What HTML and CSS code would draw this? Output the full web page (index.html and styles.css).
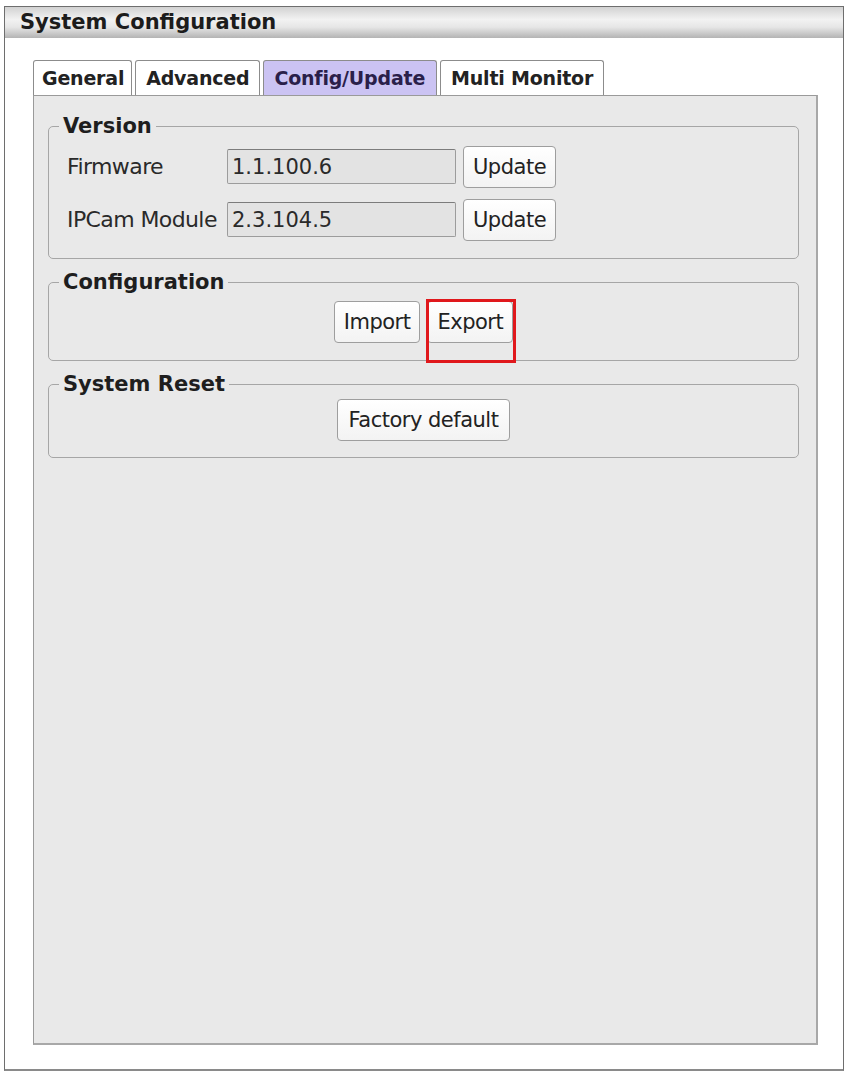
FILE: index.html
```html
<!DOCTYPE html>
<html lang="en">
<head>
    <meta charset="UTF-8">
    <meta name="viewport" content="width=device-width, initial-scale=1.0">
    <title>System Configuration</title>
    <link rel="stylesheet" href="styles.css">
</head>
<body>

    <div class="window">
        <div class="title-bar">System Configuration</div>

        <div class="content">
            <div class="tabs">
                <div class="tab first">General</div>
                <div class="tab">Advanced</div>
                <div class="tab active">Config/Update</div>
                <div class="tab">Multi Monitor</div>
            </div>

            <div class="panel">
                <fieldset class="group version">
                    <legend>Version</legend>
                    <div class="row">
                        <label>Firmware</label>
                        <input type="text" value="1.1.100.6" readonly>
                        <button>Update</button>
                    </div>
                    <div class="row">
                        <label>IPCam Module</label>
                        <input type="text" value="2.3.104.5" readonly>
                        <button>Update</button>
                    </div>
                </fieldset>

                <fieldset class="group config">
                    <legend>Configuration</legend>
                    <div class="buttons">
                        <button>Import</button>
                        <span class="marked">
                            <button>Export</button>
                            <span class="highlight"></span>
                        </span>
                    </div>
                </fieldset>

                <fieldset class="group reset">
                    <legend>System Reset</legend>
                    <div class="buttons">
                        <button class="wide">Factory default</button>
                    </div>
                </fieldset>
            </div>
        </div>
    </div>

</body>
</html>
```

FILE: styles.css
```css
body {
    margin: 0;
    padding: 0;
    background: #ffffff;
    font-family: 'DejaVu Sans', sans-serif;
    color: #1e1e1e;
}
.window {
    margin: 6px 2px 0 4px;
    height: 1065px;
    box-sizing: border-box;
    border: 1px solid #6e6e6e;
    border-bottom: 2px solid #8a8a8a;
    display: flex;
    flex-direction: column;
    background: #fff;
}
.title-bar {
    height: 31px;
    line-height: 30px;
    padding-left: 15px;
    font-size: 21px;
    font-weight: bold;
    color: #1c1c1c;
    background: linear-gradient(to bottom, #d2d2d2 0%, #f2f2f2 40%, #e6e6e6 65%, #b4b4b4 100%);
}
.content {
    flex: 1;
    display: flex;
    flex-direction: column;
    padding: 22px 25px 24px 28px;
}
.tabs {
    display: flex;
    gap: 3px;
    height: 35px;
}
.tab {
    padding: 0 10px;
    line-height: 34px;
    font-size: 19px;
    font-weight: bold;
    letter-spacing: -0.2px;
    color: #222;
    background: #fff;
    border: 1px solid #8c8c8c;
    border-bottom: none;
    border-radius: 3px 3px 0 0;
}
.tab.first {
    padding: 0 7px 0 8px;
}
.tab.active {
    padding: 0 11px 0 10px;
    background: #cbc3f3;
    color: #2a1f4a;
}
.panel {
    flex: 1;
    background: #e9e9e9;
    border: 1px solid #9a9a9a;
    border-right: 2px solid #a8a8a8;
    border-bottom: 2px solid #a8a8a8;
    padding: 18px 17px 0 14px;
}
.group {
    margin: 0 0 11px 0;
    border: 1px solid #a6a6a6;
    border-radius: 5px;
    padding: 0 18px 18px 18px;
}
.group legend {
    margin-left: -8px;
    padding: 0 4px;
    font-size: 21px;
    font-weight: bold;
    line-height: 24px;
    color: #1e1e1e;
}
.version {
    padding-top: 8px;
    padding-bottom: 18px;
}
.row {
    display: flex;
    align-items: center;
    height: 41px;
}
.row + .row {
    margin-top: 12px;
}
.row label {
    width: 160px;
    font-size: 22px;
    color: #2a2a2a;
    letter-spacing: -0.6px;
    white-space: nowrap;
}
.row input {
    width: 229px;
    height: 35px;
    box-sizing: border-box;
    padding: 0 4px;
    font-family: 'DejaVu Sans', sans-serif;
    font-size: 21px;
    color: #2a2a2a;
    background: #e3e3e3;
    border: 1px solid #9c9c9c;
    border-top-color: #7c7c7c;
    border-radius: 2px;
}
button {
    height: 42px;
    padding: 0 9px;
    font-family: 'DejaVu Sans', sans-serif;
    font-size: 21px;
    letter-spacing: -0.5px;
    color: #222;
    background: linear-gradient(to bottom, #ffffff, #f3f3f3);
    border: 1px solid #9e9e9e;
    border-radius: 4px;
}
button.wide {
    padding: 0 11px;
}
.row button {
    margin-left: 7px;
}
.buttons {
    display: flex;
    justify-content: center;
    gap: 7px;
}
.config {
    padding-top: 7px;
    padding-bottom: 17px;
}
.reset {
    padding-top: 3px;
    padding-bottom: 16px;
}
.marked {
    position: relative;
    display: inline-block;
}
.highlight {
    position: absolute;
    left: -1px;
    top: -2px;
    width: 90px;
    height: 64px;
    box-sizing: border-box;
    border: 3px solid #e0181c;
}
```
